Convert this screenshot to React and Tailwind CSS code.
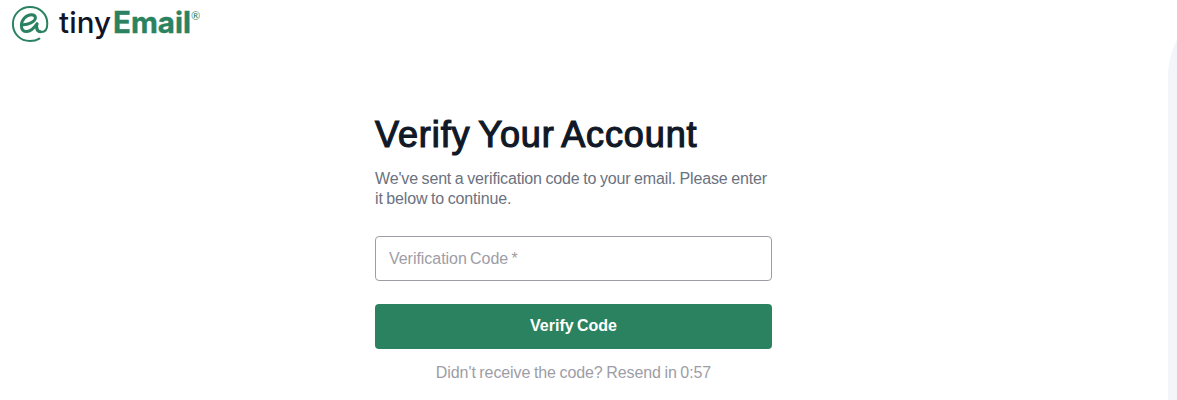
function LogoMark() {
  return (
    <svg className="h-[38px] w-[38px] shrink-0" viewBox="11 5 38 38" fill="none" stroke="#2b8260" strokeLinecap="round" strokeLinejoin="round">
      <path d="M39.4 38.6C36.6 40.3 33.5 41 30 41C20.2 41 12.9 33.6 12.9 24C12.9 14.4 20.4 7 30 7C39.8 7 47.3 14.2 47.3 23.5C47.3 28.6 45.2 32.1 41.5 32.1C38.6 32.1 37.1 30.4 37.4 27.6" strokeWidth="2" />
      <path d="M22.4 24.6C27.7 24.9 35.4 21.9 35.4 17.8C35.4 15.7 33.9 14.7 31.4 14.7C26.1 14.7 21.4 19.8 21.4 25.4C21.4 29.3 23.4 31.6 26.8 31.6C31.2 31.6 34.6 27.3 37.1 23.7C35.9 27.1 36.4 31.6 40.7 31.8" strokeWidth="3" />
    </svg>
  );
}

export default function App() {
  return (
    <div className="flex h-[400px] w-full justify-between overflow-hidden bg-white font-['Liberation_Sans',Arial,sans-serif]">
      <div className="flex min-w-0 flex-1 flex-col">
        <header className="flex h-[47px] items-start pl-[11px] pt-[5px]">
          <LogoMark />
          <div className="ml-[10px] flex items-start whitespace-nowrap font-['Inter','Open_Sans',sans-serif] text-[29.5px] leading-[35px]">
            <span className="w-[54px] font-medium tracking-[0.1px] text-[#111428]">tiny</span>
            <span className="w-[78px] font-bold tracking-[0px] text-[#2b8260] [-webkit-text-stroke:0.4px_#2b8260]">Email</span>
            <span className="pt-[5px] font-['Lato',sans-serif] text-[11px] leading-[12px] text-[#2b8260]">®</span>
          </div>
        </header>
        <main className="ml-[375px] flex w-[397px] flex-col pt-[66px]">
          <h1 className="h-[44px] whitespace-nowrap text-[36px] leading-[44px] tracking-[0.9px] text-[#111827] [-webkit-text-stroke:1.2px_#111827] [word-spacing:-2.4px]">Verify Your Account</h1>
          <p className="mt-[12px] h-[40px] whitespace-nowrap text-[16px] leading-[20px] tracking-[-0.16px] text-[#6b7280] [word-spacing:-0.6px]">
            We've sent a verification code to your email. Please enter<br />it below to continue.
          </p>
          <input aria-label="Verification Code" placeholder="Verification Code *" className="mt-[27px] h-[45px] w-full rounded-[4px] border border-[#9d9da6] px-[13px] text-[16px] tracking-[-0.04px] text-[#111827] outline-none [word-spacing:-1.1px] placeholder:text-[#9d9da6]" />
          <button className="mt-[23px] h-[45px] w-full rounded-[4px] bg-[#2b8260] pb-[2px] text-[16px] font-bold text-white [word-spacing:-1.1px]">Verify Code</button>
          <p className="mt-[14px] text-center text-[16px] leading-[20px] tracking-[-0.08px] text-[#9d9da6] [word-spacing:-0.8px]">Didn't receive the code? Resend in 0:57</p>
        </main>
      </div>
      <aside className="flex w-[9px] shrink-0 overflow-hidden">
        <div className="h-[600px] w-[600px] shrink-0 rounded-tl-[76px] bg-[#f4f5fb]" />
      </aside>
    </div>
  );
}
